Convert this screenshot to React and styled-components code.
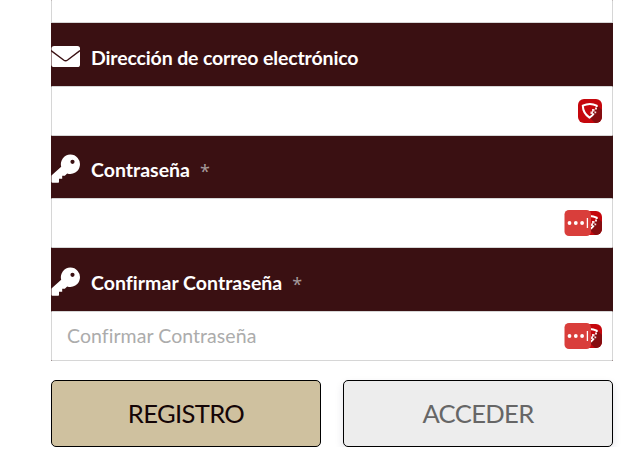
import React from 'react';
import styled, { createGlobalStyle } from 'styled-components';

// STYLES
const GlobalStyle = createGlobalStyle`
    * {
        box-sizing: border-box;
    }
    body {
        margin: 0;
        background-color: white;
        font-family: 'Lato', 'Noto Sans', sans-serif;
        font-variant-ligatures: none;
        overflow: hidden;
    }
`
const Form = styled.form`
    width: 562px;
    margin-left: 51px;
`
const Fields = styled.div`
    background-color: #3a1012;
`
const Label = styled.label`
    display: flex;
    align-items: center;
    height: ${props => props.$height}px;
    padding-top: 6px;
    color: white;

    svg {
        margin: 0 11px 3px 0;
        flex: none;
    }
`
const LabelText = styled.span`
    font-size: 19.5px;
    font-weight: 700;
    line-height: 24px;
    white-space: nowrap;
    letter-spacing: ${props => props.$spacing || 0}px;
`
const Required = styled.span`
    height: 24px;
    margin-left: 10px;
    color: #a5999a;
    font-family: 'Noto Sans', sans-serif;
    font-size: 18px;
    line-height: 26px;
`
const Field = styled.div`
    display: flex;
    align-items: center;
    height: ${props => props.$height || 50}px;
    padding: 0 10px 0 15px;
    background-color: white;
    border: 1px solid #d6d6d6;
    border-top-width: ${props => props.$cut ? 0 : 1}px;
    border-radius: 1px;
`
const Input = styled.input`
    flex: 1;
    min-width: 0;
    padding: 0 0 2px;
    border: none;
    outline: none;
    background: none;
    color: #333;
    font-family: inherit;
    font-size: 19.5px;
    font-variant-ligatures: none;
    letter-spacing: .06px;

    &::placeholder {
        color: #acacac;
        opacity: 1;
    }
`
const Badges = styled.div`
    display: flex;
    align-items: center;

    svg {
        display: block;
    }
`
const DotsBadge = styled.div`
    position: relative;
    z-index: 1;
    margin-right: -13px;
`
const Buttons = styled.div`
    display: flex;
    gap: 22px;
    margin-top: 19px;
`
const Button = styled.button`
    flex: 1;
    height: 67px;
    padding: 0 0 2px;
    border: 1px solid black;
    border-radius: 5px;
    background-color: ${props => props.$primary ? '#cfc19f' : '#ededed'};
    color: ${props => props.$primary ? '#140507' : '#666'};
    box-shadow: ${props => props.$primary ? 'none' : '0 4px 9px rgba(30, 30, 70, .12)'};
    font-family: inherit;
    font-size: 25.6px;
    letter-spacing: -.65px;
`

const Envelope = () => (
    <svg width="29" height="29" viewBox="0 0 29 29">
        <rect x=".5" y="4" width="28.5" height="21" rx="2.6" fill="white" />
        <path d="M0 8.5 12.6 18Q14.6 19.4 16.6 18L29 8.5" fill="none" stroke="#3a1012" strokeWidth="1.4" />
    </svg>
)

const Key = () => (
    <svg width="29" height="29" viewBox="0 0 29 29">
        <path fill="white" fillRule="evenodd" d="M19.3.5a9.7 9.7 0 1 1-3.1 18.9L13.8 21.8H11.2V24.8H8V28Q8 28.8 7.2 28.8H1.5Q.5 28.8.5 27.8V22.2Q.5 21.6 1 21.1L10.2 12.8A9.7 9.7 0 0 1 19.3.5ZM21.5 5.7a2.1 2.1 0 1 0 0 4.2a2.1 2.1 0 0 0 0-4.2Z" />
    </svg>
)

const Shield = () => (
    <svg width="24" height="24" viewBox="0 0 24 24">
        <rect width="24" height="24" rx="6" fill="#c5070d" />
        <path d="M20 7 24 11V18a6 6 0 0 1-6 6H17L11 18Z" fill="#850d10" />
        <path d="M18.7 8V6.6Q12 3.3 4.8 6.6Q5 14.2 11.5 18.6Q14.2 17 15.8 14.5" fill="none" stroke="white" strokeWidth="2" />
        <path d="M14 10h2.5v2.5H14zM17 8.5h2v2h-2zM12.5 12.5H15V15h-2.5zM16.5 12.5h1.7v1.7h-1.7z" fill="#f7dede" />
    </svg>
)

const Dots = () => (
    <DotsBadge>
        <svg width="27" height="26" viewBox="0 0 27 26">
            <rect x=".5" width="26.5" height="26" rx="4.5" fill="#d93e3b" />
            <circle cx="5.5" cy="13" r="1.9" fill="white" />
            <circle cx="11.8" cy="13" r="1.9" fill="white" />
            <circle cx="18.1" cy="13" r="1.9" fill="white" />
            <path d="M23.4 8v10" stroke="white" strokeWidth="1.3" />
        </svg>
    </DotsBadge>
)

const App = () => (
    <>
        <GlobalStyle />
        <Form onSubmit={e => e.preventDefault()}>
            <Fields>
                <Field $height={23} $cut />
                <Label $height={63} htmlFor="email">
                    <Envelope />
                    <LabelText $spacing={-0.14}>Dirección de correo electrónico</LabelText>
                </Label>
                <Field>
                    <Input id="email" type="email" />
                    <Badges><Shield /></Badges>
                </Field>
                <Label $height={62} htmlFor="password">
                    <Key />
                    <LabelText>Contraseña</LabelText>
                    <Required>*</Required>
                </Label>
                <Field>
                    <Input id="password" type="password" />
                    <Badges><Dots /><Shield /></Badges>
                </Field>
                <Label $height={63} htmlFor="confirm">
                    <Key />
                    <LabelText $spacing={0.03}>Confirmar Contraseña</LabelText>
                    <Required>*</Required>
                </Label>
                <Field>
                    <Input id="confirm" type="password" placeholder="Confirmar Contraseña" />
                    <Badges><Dots /><Shield /></Badges>
                </Field>
            </Fields>
            <Buttons>
                <Button type="submit" $primary>REGISTRO</Button>
                <Button type="button">ACCEDER</Button>
            </Buttons>
        </Form>
    </>
);

export default App;
